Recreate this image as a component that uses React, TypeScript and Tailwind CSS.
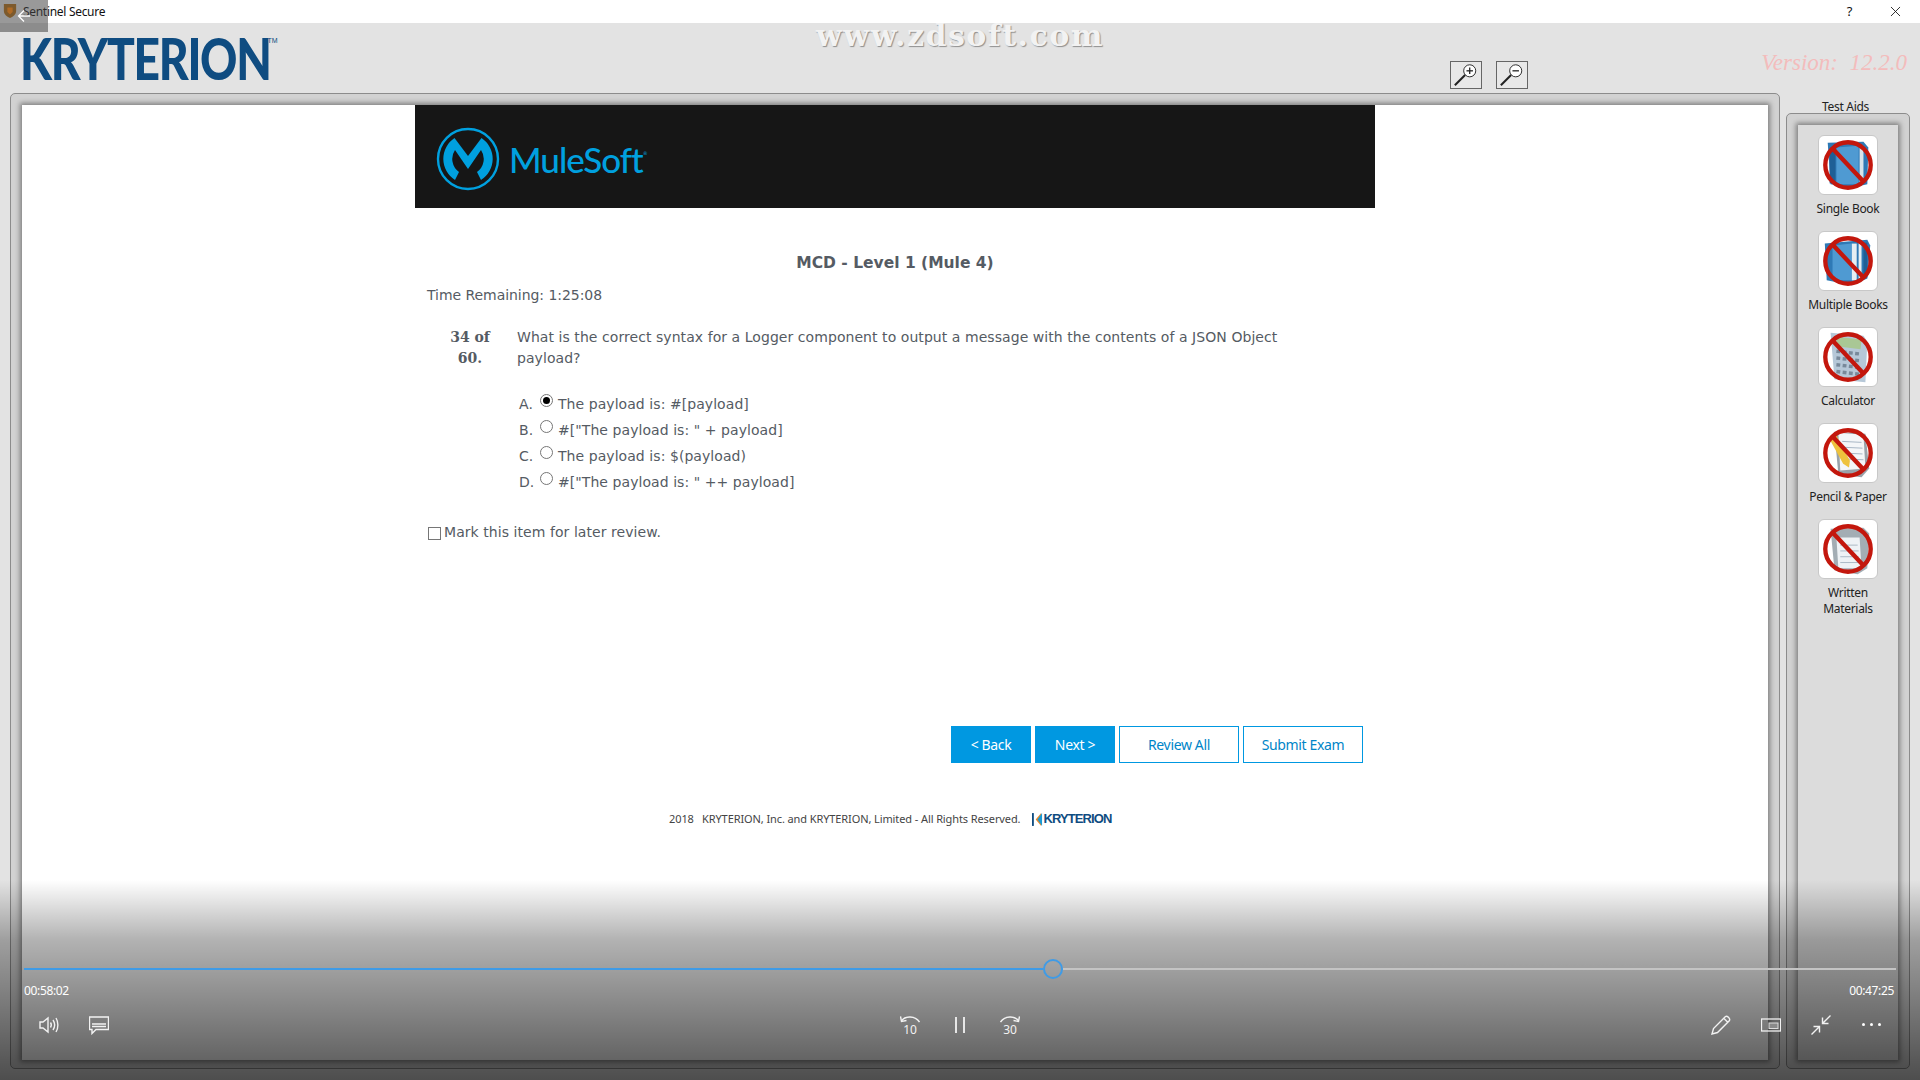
import React from 'react';
import { X } from 'lucide-react';

const bodyFont = "font-['DejaVu_Sans',sans-serif]";
const uiFont = "font-['Noto_Sans',sans-serif]";

const ProhibitSign = () => (
	<>
		<circle cx="30" cy="30" r="23.5" fill="none" stroke="#c3170d" strokeWidth="4.5" />
		<line x1="14" y1="13" x2="46" y2="47" stroke="#c3170d" strokeWidth="4.5" />
	</>
);

const SingleBookArt = () => (
	<>
		<path d="M9 7 L46 6 L51 12 L50 50 L36 53 L12 50 Z" fill="#2f79b5" />
		<path d="M18 12 L41 10 L41 50 L18 50 Z" fill="#4f9ad2" />
		<rect x="42" y="11" width="4" height="38" fill="#d9e4ea" />
		<rect x="11" y="12" width="6" height="37" fill="#1f5f96" />
	</>
);

const MultipleBooksArt = () => (
	<>
		<path d="M6 12 L50 8 L53 14 L50 48 L34 55 L8 50 Z" fill="#2f79b5" />
		<path d="M14 14 L34 12 L34 50 L14 50 Z" fill="#4f9ad2" />
		<rect x="34" y="12" width="5" height="38" fill="#e6eef2" />
		<rect x="41" y="11" width="3" height="38" fill="#e6eef2" />
		<rect x="46" y="11" width="4" height="36" fill="#1f5f96" />
	</>
);

const CalculatorArt = () => (
	<>
		<path d="M12 5 L46 8 L50 14 L48 56 L16 53 Z" fill="#b6c8d8" />
		<path d="M18 9 L44 12 L43 22 L18 19 Z" fill="#a9c795" />
		<path d="M18 24 L43 27 M18 31 L43 34 M18 38 L43 41 M18 45 L43 48" stroke="#78899a" strokeWidth="3.5" strokeDasharray="4 2.5" />
	</>
);

const PencilPaperArt = () => (
	<>
		<path d="M16 8 L48 10 L52 46 L44 55 L20 52 Z" fill="#9aa3aa" />
		<path d="M20 9 L46 11 L48 46 L22 48 Z" fill="#f4f6f8" />
		<path d="M24 18 L44 19 M24 24 L45 25 M24 30 L45 31 M24 36 L46 37" stroke="#a6b4c4" strokeWidth="1" />
		<path d="M10 14 L17 10 L32 38 L31 45 L25 41 Z" fill="#eec23d" />
	</>
);

const WrittenArt = () => (
	<>
		<path d="M12 9 L46 8 L52 14 L50 50 L40 56 L16 52 Z" fill="#a3adb4" />
		<path d="M18 18 L42 18 L44 50 L20 50 Z" fill="#eef2f5" />
		<path d="M22 26 L40 26 M22 32 L41 32 M22 38 L41 38 M22 44 L41 44" stroke="#aab7c4" strokeWidth="1" />
	</>
);

const aids = [
	{ label: 'Single Book', art: <SingleBookArt /> },
	{ label: 'Multiple Books', art: <MultipleBooksArt /> },
	{ label: 'Calculator', art: <CalculatorArt /> },
	{ label: 'Pencil & Paper', art: <PencilPaperArt /> },
	{ label: 'Written Materials', art: <WrittenArt /> },
];

const choices = [
	{ letter: 'A.', text: 'The payload is: #[payload]', selected: true },
	{ letter: 'B.', text: '#["The payload is: " + payload]', selected: false },
	{ letter: 'C.', text: 'The payload is: $(payload)', selected: false },
	{ letter: 'D.', text: '#["The payload is: " ++ payload]', selected: false },
];

const AidButton = ({ label, art }: { label: string; art: React.ReactNode }) => (
	<div className="flex flex-col items-center h-[96px]">
		<div className="w-[60px] h-[60px] bg-white rounded-md border border-[#c8c8c8]">
			<svg viewBox="0 0 60 60" className="w-full h-full">
				{art}
				<ProhibitSign />
			</svg>
		</div>
		<div className="mt-[6px] w-[80px] text-center text-[12px] leading-[16px] tracking-[-0.3px] text-[#222]">{label}</div>
	</div>
);

const ZoomButton = ({ plus }: { plus: boolean }) => (
	<div className="relative w-[32px] h-[28px] border border-[#666] bg-[#e8e8e8]">
		<svg viewBox="0 0 32 28" className="w-full h-full">
			<circle cx="20" cy="9.5" r="6.5" fill="#fff" stroke="#222" strokeWidth="1" />
			<line x1="15" y1="14" x2="4" y2="25" stroke="#222" strokeWidth="2.2" />
			<line x1="16.5" y1="9.5" x2="23.5" y2="9.5" stroke="#222" strokeWidth="1.4" />
			{plus && <line x1="20" y1="6" x2="20" y2="13" stroke="#222" strokeWidth="1.4" />}
		</svg>
	</div>
);

const MuleLogo = () => (
	<svg viewBox="0 0 64 64" className="w-[64px] h-[64px]">
		<circle cx="32" cy="32" r="30" fill="none" stroke="#00a0df" strokeWidth="2.4" />
		<path
			d="M19 53 A25 25 0 0 1 18.5 11 L32 29 L45.5 11 A25 25 0 0 1 45 53 L41 45 A16 16 0 0 0 45 23 L32 42 L19 23 A16 16 0 0 0 23 45 Z"
			fill="#00a0df"
		/>
	</svg>
);

const ControlIcon = ({ children, className }: { children: React.ReactNode; className: string }) => (
	<svg viewBox="0 0 20 20" fill="none" stroke="#f2f2f2" strokeWidth="1.4" className={`w-[20px] h-[20px] ${className}`}>
		{children}
	</svg>
);

const VideoOverlay = () => (
	<div className="absolute left-0 right-0 top-[880px] bottom-0 bg-gradient-to-b from-[rgba(0,0,0,0)] via-[rgba(0,0,0,0.3)] via-30% to-[rgba(0,0,0,0.66)]">
		<div className="absolute left-[24px] right-[24px] top-[88px] flex h-[2px]">
			<div className="w-[1019px] bg-[#3f9be6]" />
			<div className="w-[20px]" />
			<div className="flex-1 bg-[#c4c4c4]" />
			<div className="absolute left-[1019px] top-[-9px] w-[20px] h-[20px] rounded-full border-[2.5px] border-[#3f9be6]" />
		</div>
		<div className={`absolute left-[24px] right-[26px] top-[103px] flex justify-between text-[12px] leading-[16px] tracking-[-0.35px] text-white ${uiFont}`}>
			<span>00:58:02</span>
			<span>00:47:25</span>
		</div>
		<ControlIcon className="absolute left-[39px] top-[135px]">
			<path d="M1 7 H4 L9 3 V17 L4 13 H1 Z" />
			<path d="M11.5 7.5 C12.5 9 12.5 11 11.5 12.5 M14 5 C16 8 16 12 14 15 M17 3 C19.5 7 19.5 13 17 17" />
		</ControlIcon>
		<ControlIcon className="absolute left-[89px] top-[135px]">
			<path d="M0.5 2 H19.5 V14.5 H7 L3 18.5 V14.5 H0.5 Z" />
			<path d="M3 9 H17 M3 11.5 H17" />
		</ControlIcon>
		<ControlIcon className="absolute left-[900px] top-[135px]">
			<path d="M1.5 6 C5 0.5 15 0.5 19.5 7" />
			<path d="M0.5 1.5 L1.5 6.5 L6.5 5.5" />
		</ControlIcon>
		<span className={`absolute left-[900px] top-[143px] w-[20px] text-center text-[12px] leading-[14px] text-[#f2f2f2] ${uiFont}`}>10</span>
		<div className="absolute left-[955px] top-[137px] flex gap-[6px]">
			<div className="w-[2px] h-[16px] bg-[#e6e6e6]" />
			<div className="w-[2px] h-[16px] bg-[#e6e6e6]" />
		</div>
		<ControlIcon className="absolute left-[1000px] top-[135px]">
			<path d="M18.5 6 C15 0.5 5 0.5 0.5 7" />
			<path d="M19.5 1.5 L18.5 6.5 L13.5 5.5" />
		</ControlIcon>
		<span className={`absolute left-[1000px] top-[143px] w-[20px] text-center text-[12px] leading-[14px] text-[#f2f2f2] ${uiFont}`}>30</span>
		<ControlIcon className="absolute left-[1711px] top-[135px]">
			<path d="M1 19 L2.5 13.5 L14.5 1.5 C16 0.3 19.5 3.5 18.5 5.5 L6.5 17.5 Z M13 3.5 L16.5 7" />
		</ControlIcon>
		<ControlIcon className="absolute left-[1761px] top-[135px]">
			<rect x="0.5" y="4" width="19" height="12" strokeWidth="1.3" />
			<rect x="8" y="8" width="9" height="5.5" fill="#8a8a8a" stroke="#dcdcdc" strokeWidth="1" />
		</ControlIcon>
		<ControlIcon className="absolute left-[1811px] top-[135px]">
			<path d="M19.5 0.5 L11.5 8.5 M11.5 2.5 V8.5 H17.5 M0.5 19.5 L8.5 11.5 M2.5 11.5 H8.5 V17.5" />
		</ControlIcon>
		<div className="absolute left-[1862px] top-[143px] flex gap-[5px]">
			<div className="w-[3px] h-[3px] rounded-full bg-white" />
			<div className="w-[3px] h-[3px] rounded-full bg-white" />
			<div className="w-[3px] h-[3px] rounded-full bg-white" />
		</div>
	</div>
);

const App = () => {
	return (
		<div className={`relative flex flex-col w-[1920px] h-[1080px] overflow-hidden bg-[#e3e3e3] ${uiFont}`}>
			<div className="relative flex items-center justify-between h-[23px] bg-white pl-[23px] pr-[16px] text-[12px] tracking-[-0.3px] text-[#111]">
				<span>Sentinel Secure</span>
				<div className="flex items-center gap-[35px]">
					<span className="text-[13px]">?</span>
					<X size={17} strokeWidth={1.2} />
				</div>
			</div>
			<div className="absolute left-0 top-0 flex items-center justify-center w-[48px] h-[32px] bg-[rgba(70,70,70,0.55)]">
				<svg viewBox="0 0 14 14" className="w-[14px] h-[14px] ml-[-1px]" fill="none" stroke="#fff" strokeWidth="1.3">
					<path d="M13 7 H1.5 M7 1.5 L1.5 7 L7 12.5" />
				</svg>
			</div>
			<svg viewBox="0 0 16 18" className="absolute left-[3px] top-[3px] w-[14px] h-[16px]">
				<path d="M1 1 H15 V9 C15 13 11 16 8 17 C5 16 1 13 1 9 Z" fill="#7d5a2c" />
				<path d="M5 5 H11 V10 L8 13 L5 10 Z" fill="#b06a24" />
			</svg>

			<div className="relative flex items-start h-[70px] pl-[20px]">
				<span className="mt-[1px] origin-left scale-x-[0.81] font-['Lato',sans-serif] font-black text-[57px] leading-[68px] tracking-[-1.6px] text-[#0f4c81]">KRYTERION</span>
				<span className="mt-[14px] ml-[-62px] font-['Liberation_Sans',sans-serif] text-[7px] leading-[8px] text-[#0f4c81]">TM</span>
				<span className="absolute left-[816px] top-[-5px] whitespace-nowrap font-['DejaVu_Serif',serif] font-bold text-[30px] leading-[36px] tracking-[1.5px] text-[#f2f2f2] [text-shadow:1px_1px_1px_#8f8f8f]">
					www.zdsoft.com
				</span>
				<div className="absolute left-[1450px] top-[38px] flex gap-[14px]">
					<ZoomButton plus />
					<ZoomButton plus={false} />
				</div>
				<span className="absolute right-[13px] top-[25px] whitespace-nowrap font-['Liberation_Serif',serif] italic text-[23px] leading-[30px] text-[#f3bcbc]">Version:&nbsp; 12.2.0</span>
			</div>

			<div className="flex flex-1 pl-[10px] pb-[11px] gap-[6px]">
				<div className="flex w-[1770px] pt-[11px] px-[11px] pb-[8px] bg-[#d2d2d2] border border-[#8c8c8c] rounded-[5px]">
					<div className={`flex flex-col items-center w-full bg-white shadow-[0_0_5px_2px_rgba(0,0,0,0.4)] ${bodyFont} text-[#555b63]`}>
						<div className="flex items-center w-[960px] h-[103px] pl-[21px] pt-[4px] bg-[#161616]">
							<MuleLogo />
							<span className="ml-[9px] font-['Lato',sans-serif] font-medium text-[35px] leading-[44px] tracking-[-1px] text-[#00a0df]">MuleSoft</span>
							<span className="mb-[10px] text-[5px] text-[#00a0df]">®</span>
						</div>
						<div className="w-[960px] pl-[12px]">
							<div className="mt-[46px] text-center text-[15.5px] leading-[19px] font-bold pr-[12px]">MCD - Level 1 (Mule 4)</div>
							<div className="mt-[13px] text-[14px] leading-[18px] tracking-[-0.05px]">Time Remaining: 1:25:08</div>
							<div className="flex mt-[23px]">
								<div className="w-[90px] pr-[4px] text-center text-[14px] leading-[21px] font-bold font-['DejaVu_Serif',serif]">
									34 of
									<br />
									60.
								</div>
								<div className="w-[800px] text-[14px] leading-[21px] tracking-[0.06px]">
									What is the correct syntax for a Logger component to output a message with the contents of a JSON Object payload?
								</div>
							</div>
							<div className="flex flex-col mt-[22px] ml-[92px]">
								{choices.map((choice) => (
									<div key={choice.letter} className="flex items-center h-[26px] text-[14px] tracking-[0.06px]">
										<span className="w-[21px]">{choice.letter}</span>
										<span className="relative top-[-4px] flex items-center justify-center w-[13px] h-[13px] mr-[5px] rounded-full border border-[#767676] bg-white">
											{choice.selected && <span className="w-[7px] h-[7px] rounded-full bg-black" />}
										</span>
										<span>{choice.text}</span>
									</div>
								))}
							</div>
							<div className="flex items-center mt-[28px] text-[14px] leading-[18px] tracking-[0.06px]">
								<span className="relative top-[1px] left-[1px] w-[13px] h-[13px] mr-[4px] border border-[#767676] bg-white" />
								Mark this item for later review.
							</div>
							<div className={`flex justify-end gap-[4px] mt-[185px] pr-[12px] text-[14px] tracking-[-0.35px] ${uiFont}`}>
								<div className="flex items-center justify-center w-[80px] h-[37px] bg-[#0098e1] text-white">&lt; Back</div>
								<div className="flex items-center justify-center w-[80px] h-[37px] bg-[#0098e1] text-white">Next &gt;</div>
								<div className="flex items-center justify-center w-[120px] h-[37px] border border-[#0098e1] text-[#0085c8]">Review All</div>
								<div className="flex items-center justify-center w-[120px] h-[37px] border border-[#0098e1] text-[#0085c8]">Submit Exam</div>
							</div>
							<div className={`flex items-center mt-[47px] ml-[242px] text-[11px] leading-[18px] tracking-[-0.1px] text-[#444] ${uiFont}`}>
								<span>2018 &nbsp; KRYTERION, Inc. and KRYTERION, Limited - All Rights Reserved.</span>
								<svg viewBox="0 0 12 16" className="ml-[12px] w-[11px] h-[15px]">
									<rect x="0" y="1" width="2" height="14" fill="#0f4c81" />
									<path d="M10 1 L4 8 L10 15 Z" fill="#e98a2b" />
									<path d="M11 1 L6 8 L11 15 Z" fill="#1a9ad6" />
								</svg>
								<span className="font-['Liberation_Sans',sans-serif] font-bold text-[13px] tracking-[-0.9px] text-[#0f4c81]">KRYTERION</span>
							</div>
						</div>
					</div>
				</div>
				<div className="relative flex w-[124px] mt-[20px] pt-[11px] px-[11px] pb-[8px] bg-[#d2d2d2] border border-[#8c8c8c] rounded-[5px]">
					<div className="absolute left-0 right-[5px] top-[-14px] text-center text-[12px] leading-[14px] tracking-[-0.3px] text-[#222]">Test Aids</div>
					<div className="flex flex-col items-center w-full pt-[10px] bg-[#dcdcdc] shadow-[0_0_5px_2px_rgba(0,0,0,0.4)]">
						{aids.map((aid) => (
							<AidButton key={aid.label} label={aid.label} art={aid.art} />
						))}
					</div>
				</div>
			</div>
			<VideoOverlay />
		</div>
	);
};

export default App;
